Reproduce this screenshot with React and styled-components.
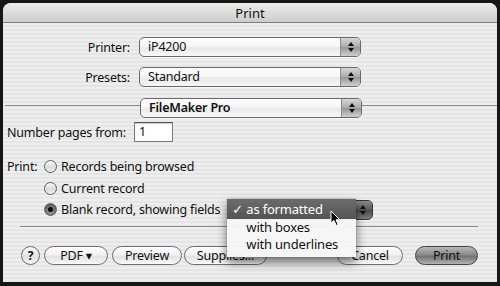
import React from "react";
import styled, { createGlobalStyle } from "styled-components";

const Global = createGlobalStyle`
  html, body { margin: 0; padding: 0; background: #161616; }
  body { width: 500px; height: 286px; overflow: hidden; font-family: "Noto Sans", "DejaVu Sans", sans-serif; }
  #root { padding: 3px 3px 0 3px; }
`;

const Window = styled.div`
  width: 494px;
  height: 279px;
  border-radius: 8px 8px 0 0;
  overflow: hidden;
  display: flex;
  flex-direction: column;
  background: repeating-linear-gradient(#eeeeee 0 2px, #e5e5e5 2px 4px);
  color: #111;
`;

const TitleBar = styled.div`
  height: 19px;
  flex: none;
  display: flex;
  align-items: center;
  justify-content: center;
  font-size: 13px;
  background: linear-gradient(#ececec, #d9d9d9 60%, #cdcdcd);
  border-bottom: 1px solid #7c7c7c;
`;

const Body = styled.div`
  flex: 1;
  display: flex;
  flex-direction: column;
  padding-top: 14px;
  font-size: 12.5px;
  letter-spacing: -0.2px;
`;

const FieldRow = styled.div`
  display: grid;
  grid-template-columns: 127px auto;
  column-gap: 9px;
  align-items: center;
  margin-bottom: ${p => p.$mb || 0}px;
`;

const Label = styled.span`
  text-align: right;
  white-space: nowrap;
`;

const PopupBox = styled.div`
  display: flex;
  width: ${p => p.$w}px;
  height: 20px;
  box-sizing: border-box;
  border: 1px solid #6a6a6a;
  border-radius: 5px;
  overflow: hidden;
  background: linear-gradient(#fefefe, #f6f6f6 45%, #e9e9e9 55%, #f7f7f7);
  box-shadow: 0 1px 0 rgba(255,255,255,0.6);
  position: relative;
  flex: none;
`;

const PopupText = styled.span`
  flex: 1;
  padding-left: 8px;
  line-height: 18px;
  white-space: nowrap;
  font-weight: ${p => (p.$bold ? 600 : 400)};
`;

const PopupArrows = styled.span`
  width: 19px;
  flex: none;
  border-left: 1px solid #8d8d8d;
  background: linear-gradient(#d6d6d6, #acacac 48%, #979797 52%, #cfcfcf);
  display: flex;
  flex-direction: column;
  align-items: center;
  justify-content: center;
  gap: 2px;
  ${p => p.$dark && `background: linear-gradient(#8a8a8a, #5c5c5c 48%, #4a4a4a 52%, #7c7c7c); border-left-color: #444;`}
`;

const Tri = styled.span`
  width: 0;
  height: 0;
  border-left: 3px solid transparent;
  border-right: 3px solid transparent;
  ${p => (p.$up ? "border-bottom: 4px solid #111;" : "border-top: 4px solid #111;")}
`;

const Popup = ({ w, children, bold }) => (
  <PopupBox $w={w}>
    <PopupText $bold={bold}>{children}</PopupText>
    <PopupArrows>
      <Tri $up />
      <Tri />
    </PopupArrows>
  </PopupBox>
);

const SepRow = styled.div`
  display: flex;
  align-items: flex-start;
  padding-left: 2px;
  margin-bottom: 4px;
`;

const Line = styled.div`
  flex: 1;
  height: 1px;
  margin-top: 7px;
  background: #8a8a8a;
`;

const NumRow = styled.div`
  display: flex;
  align-items: center;
  padding-left: 4px;
  gap: 8px;
  margin-bottom: 14px;
`;

const TextInput = styled.div`
  width: 39px;
  height: 20px;
  box-sizing: border-box;
  border: 1px solid #7a7a7a;
  border-top-color: #555;
  background: #fff;
  padding-left: 4px;
  line-height: 18px;
  box-shadow: inset 0 1px 1px rgba(0,0,0,0.2);
`;

const PrintGrid = styled.div`
  display: grid;
  grid-template-columns: 37px auto;
  grid-auto-rows: 21.5px;
  align-items: center;
  padding-left: 4px;
`;

const RadioRow = styled.div`
  grid-column: 2;
  display: flex;
  align-items: center;
  gap: 4px;
  white-space: nowrap;
`;

const Radio = styled.span`
  width: 13px;
  height: 13px;
  box-sizing: border-box;
  border-radius: 50%;
  border: 1px solid #5e5e5e;
  flex: none;
  display: flex;
  align-items: center;
  justify-content: center;
  background: ${p => (p.$on ? "radial-gradient(circle at 50% 70%, #9a9a9a, #4e4e4e)" : "linear-gradient(#fafafa, #dcdcdc 55%, #f2f2f2)")};
  &::after {
    content: "";
    display: ${p => (p.$on ? "block" : "none")};
    width: 5px;
    height: 5px;
    border-radius: 50%;
    background: #0a0a0a;
  }
`;

const MenuAnchor = styled.div`
  position: relative;
  margin-left: 4px;
`;

const DarkPopup = styled(PopupBox)`
  background: linear-gradient(#6a6a6a, #4a4a4a 50%, #3c3c3c 55%, #606060);
  border-color: #333;
`;

const Menu = styled.div`
  position: absolute;
  left: -1px;
  top: -1px;
  width: 129px;
  padding-bottom: 4px;
  background: rgba(246,246,246,0.97);
  box-shadow: 0 5px 10px rgba(0,0,0,0.55), 0 0 1px rgba(0,0,0,0.4);
  z-index: 5;
  font-size: 13px;
`;

const MenuItem = styled.div`
  height: ${p => (p.$sel ? 20 : 17)}px;
  display: flex;
  align-items: center;
  padding-left: 19px;
  position: relative;
  white-space: nowrap;
  color: ${p => (p.$sel ? "#fff" : "#111")};
  background: ${p => (p.$sel ? "linear-gradient(#6c6c6c, #545454)" : "transparent")};
`;

const Check = styled.span`
  position: absolute;
  left: 5px;
`;

const Cursor = styled.svg`
  position: absolute;
  left: 103px;
  top: 11px;
  z-index: 6;
`;

const BottomSep = styled.div`
  height: 1px;
  background: #8a8a8a;
  margin: 5px 19px 0 17px;
`;

const ButtonRow = styled.div`
  display: flex;
  align-items: center;
  margin-top: 19px;
  padding: 0 19px 0 18px;
`;

const Group = styled.div`
  display: flex;
  align-items: center;
  gap: ${p => p.$gap}px;
`;

const Spacer = styled.div`
  flex: 1;
`;

const HelpButton = styled.span`
  width: 19px;
  height: 19px;
  box-sizing: border-box;
  border-radius: 50%;
  border: 1px solid #6a6a6a;
  background: linear-gradient(#fbfbfb, #e2e2e2 55%, #f5f5f5);
  display: flex;
  align-items: center;
  justify-content: center;
  font-weight: 700;
  font-size: 12px;
  margin-right: 4px;
`;

const Button = styled.span`
  width: ${p => p.$w}px;
  height: 19px;
  box-sizing: border-box;
  border-radius: 10px;
  border: 1px solid ${p => (p.$default ? "#444" : "#6e6e6e")};
  background: ${p =>
    p.$default
      ? "linear-gradient(#b8b8b8, #8a8a8a 45%, #737373 55%, #9c9c9c 85%, #b5b5b5)"
      : "linear-gradient(#ffffff, #f2f2f2 45%, #e2e2e2 55%, #f3f3f3 90%, #ffffff)"};
  display: flex;
  align-items: center;
  justify-content: center;
  font-size: 12.5px;
  white-space: nowrap;
  flex: none;
`;

export default function App() {
  return (
    <>
      <Global />
      <Window>
        <TitleBar>Print</TitleBar>
        <Body>
          <FieldRow $mb={10}>
            <Label>Printer:</Label>
            <Popup w={222}>iP4200</Popup>
          </FieldRow>
          <FieldRow $mb={11}>
            <Label>Presets:</Label>
            <Popup w={222}>Standard</Popup>
          </FieldRow>
          <SepRow>
            <Line />
            <Popup w={222} bold>FileMaker Pro</Popup>
            <Line />
          </SepRow>
          <NumRow>
            <span>Number pages from:</span>
            <TextInput>1</TextInput>
          </NumRow>
          <PrintGrid>
            <span>Print:</span>
            <RadioRow>
              <Radio />
              <span>Records being browsed</span>
            </RadioRow>
            <RadioRow>
              <Radio />
              <span>Current record</span>
            </RadioRow>
            <RadioRow>
              <Radio $on />
              <span>Blank record, showing fields</span>
              <MenuAnchor>
                <DarkPopup $w={145}>
                  <PopupText />
                  <PopupArrows $dark>
                    <Tri $up />
                    <Tri />
                  </PopupArrows>
                </DarkPopup>
                <Menu>
                  <MenuItem $sel>
                    <Check>✓</Check>as formatted
                  </MenuItem>
                  <MenuItem>with boxes</MenuItem>
                  <MenuItem>with underlines</MenuItem>
                  <Cursor width="11" height="17" viewBox="0 0 11 17">
                    <path d="M1 1 L1 13 L4 10.5 L6.3 15.5 L8.2 14.6 L6 9.8 L9.8 9.8 Z" fill="#000" stroke="#fff" strokeWidth="1" strokeLinejoin="round" />
                  </Cursor>
                </Menu>
              </MenuAnchor>
            </RadioRow>
          </PrintGrid>
          <BottomSep />
          <ButtonRow>
            <Group $gap={4}>
              <HelpButton>?</HelpButton>
            </Group>
            <Group $gap={4}>
              <Button $w={64}>PDF ▾</Button>
              <Button $w={70}>Preview</Button>
            </Group>
            <Group $gap={0} style={{ marginLeft: 2 }}>
              <Button $w={83}>Supplies...</Button>
            </Group>
            <Spacer />
            <Group $gap={12}>
              <Button $w={66}>Cancel</Button>
              <Button $w={63} $default>Print</Button>
            </Group>
          </ButtonRow>
        </Body>
      </Window>
    </>
  );
}
